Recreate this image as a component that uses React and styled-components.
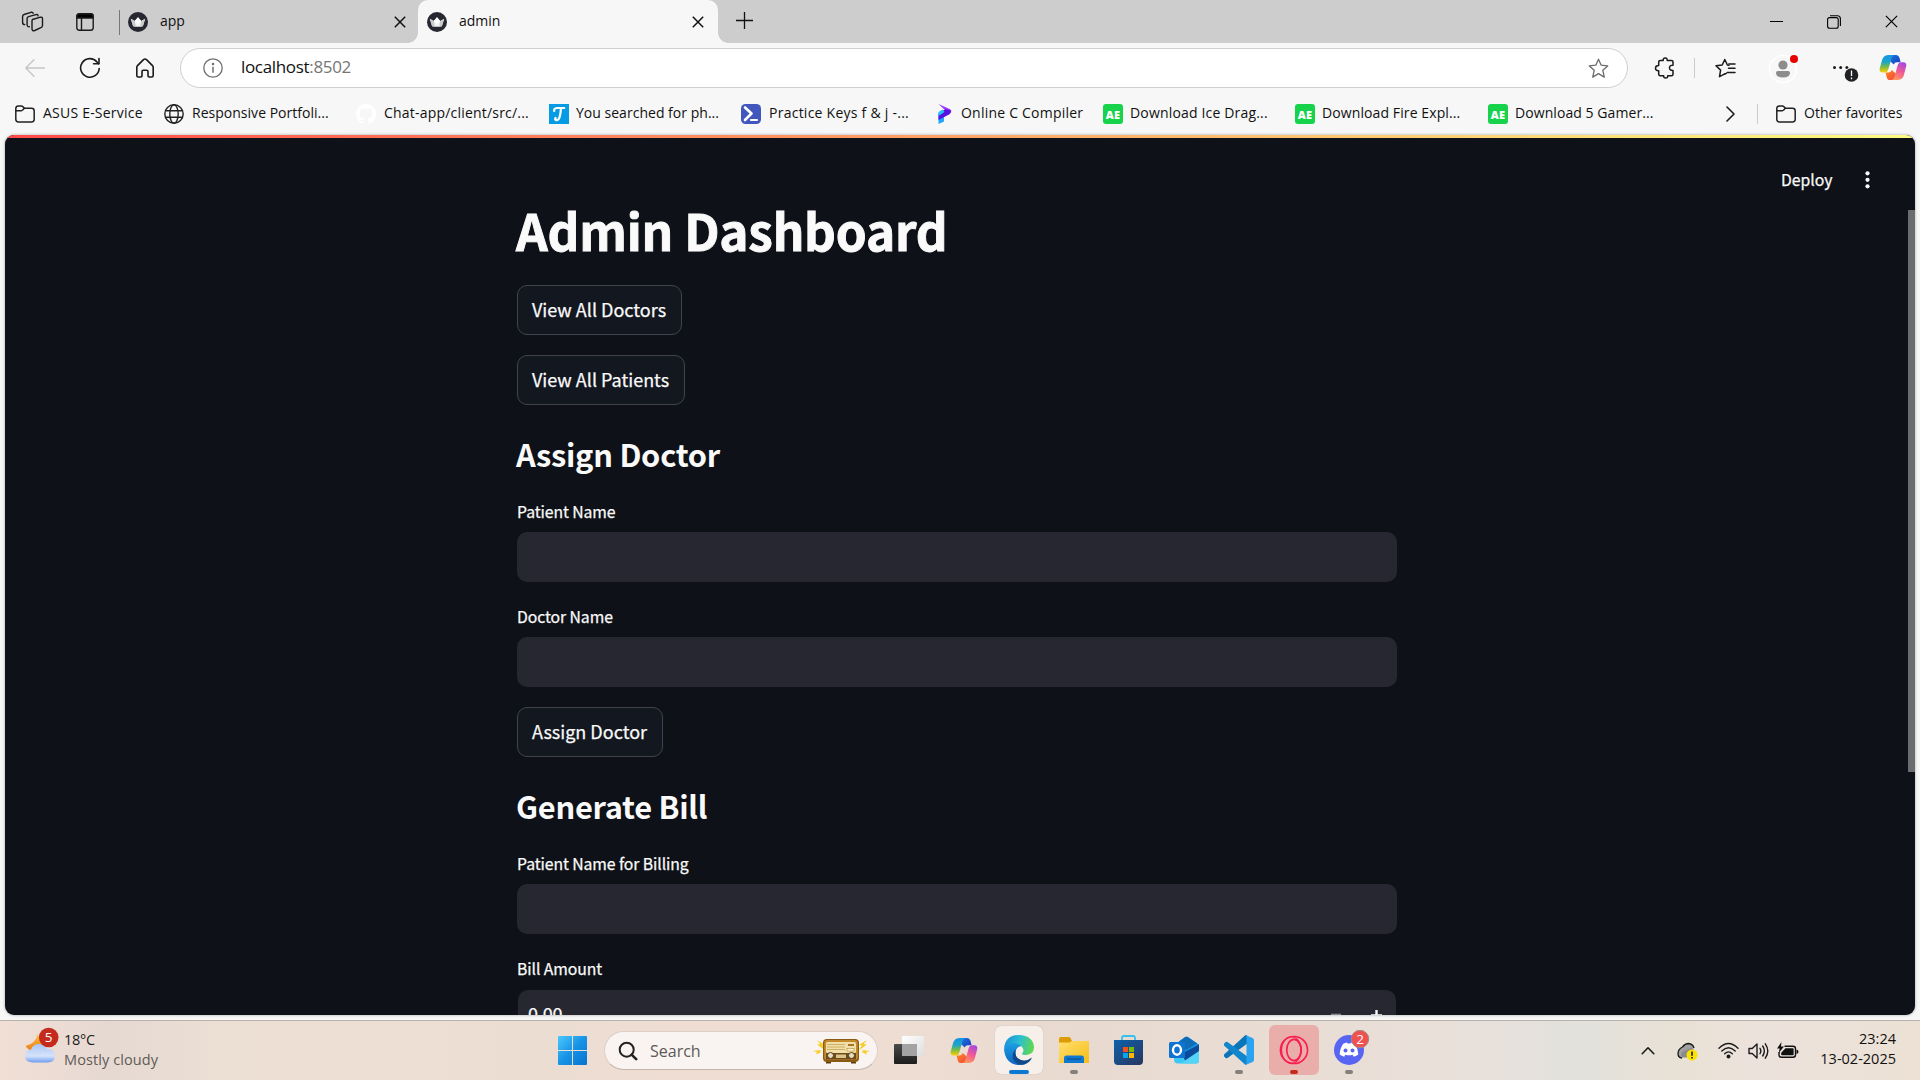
import React from "react";
import styled, { createGlobalStyle } from "styled-components";

const Global = createGlobalStyle`
  * { box-sizing: border-box; }
  html, body { margin: 0; padding: 0; overflow: hidden; }
  body { font-family: "Open Sans", "Noto Sans", sans-serif; }
  svg { display: block; flex: none; }
`;

const Screen = styled.div`
  width: 1920px;
  height: 1080px;
  display: flex;
  flex-direction: column;
  background: #f7f7f7;
  overflow: hidden;
`;

const Text = styled.span`
  display: block;
  flex: none;
  white-space: pre;
  font-size: ${(p) => p.$size || 14}px;
  line-height: ${(p) => p.$lh || 20}px;
  letter-spacing: ${(p) => p.$ls || 0}px;
  color: ${(p) => p.$color || "#111"};
`;

/* ---------- tab strip ---------- */
const TabStrip = styled.div`
  height: 43px;
  background: #cdcdcd;
  display: flex;
  flex: none;
`;
const StripTools = styled.div`
  width: 118px;
  display: flex;
  align-items: center;
  padding-left: 21px;
  gap: 32px;
`;
const StripRule = styled.div`
  width: 1px;
  height: 25px;
  margin: 10px 0 0 1px;
  background: #777;
`;
const Tab = styled.div`
  position: relative;
  width: 300px;
  height: 43px;
  display: flex;
  align-items: center;
  padding: 0 ${(p) => (p.$active ? 14 : 12)}px 0 ${(p) => (p.$active ? 9 : 10)}px;
  margin-left: ${(p) => (p.$active ? 0 : -2)}px;
  background: ${(p) => (p.$active ? "#f7f7f7" : "transparent")};
  border-radius: 10px 10px 0 0;
  ${(p) =>
    p.$active &&
    `&::before, &::after {
      content: "";
      position: absolute;
      bottom: 0;
      width: 10px;
      height: 10px;
    }
    &::before { left: -10px; background: radial-gradient(circle at 0 0, transparent 9.5px, #f7f7f7 10px); }
    &::after { right: -10px; background: radial-gradient(circle at 100% 0, transparent 9.5px, #f7f7f7 10px); }`}
`;
const TabTitle = styled(Text)`
  margin: -1px auto 0 12px;
`;
const NewTab = styled.div`
  padding: 12px 0 0 18px;
`;
const WindowControls = styled.div`
  margin-left: auto;
  display: flex;
  align-items: center;
  gap: 44px;
  padding-right: 22px;
`;

/* ---------- toolbar ---------- */
const Toolbar = styled.div`
  height: 49px;
  flex: none;
  display: flex;
  align-items: center;
  padding-left: 24px;
`;
const NavButtons = styled.div`
  width: 156px;
  display: flex;
  gap: 33px;
`;
const Address = styled.div`
  width: 1448px;
  height: 40px;
  border: 1px solid #cfcfcf;
  border-radius: 20px;
  background: #fff;
  display: flex;
  align-items: center;
  padding: 0 18px 0 22px;
  & > :last-child { margin-left: auto; }
`;
const Url = styled(Text)`
  margin-left: 18px;
  margin-top: -1px;
`;
const Port = styled.span`
  color: #767676;
`;
const ToolbarActions = styled.div`
  flex: 1;
  display: flex;
  align-items: center;
  padding-left: 26px;
`;
const Rule = styled.div`
  width: 1px;
  height: 20px;
  background: #cbcbcb;
  margin: 0 ${(p) => p.$r}px 0 ${(p) => p.$l}px;
  flex: none;
`;
const Avatar = styled.div`
  margin-left: 32px;
`;
const More = styled.div`
  margin-left: 32px;
`;
const CopilotSlot = styled.div`
  margin-left: 19px;
`;

/* ---------- bookmarks ---------- */
const Bookmarks = styled.div`
  height: 43px;
  flex: none;
  display: flex;
  align-items: center;
  padding: 0 0 0 15px;
`;
const Bookmark = styled.div`
  width: ${(p) => p.$w}px;
  flex: none;
  display: flex;
  align-items: center;
  gap: ${(p) => p.$gap || 8}px;
`;
const BookText = styled(Text)`
  margin-top: -1px;
`;
const AeTile = styled.div`
  width: 20px;
  height: 20px;
  border-radius: 3px;
  background: #17d24b;
  color: #fff;
  font: 800 11px/22px "Open Sans", sans-serif;
  text-align: center;
  letter-spacing: 0.2px;
`;

/* ---------- page ---------- */
const PageFrame = styled.div`
  height: 885px;
  flex: none;
  padding: 0 5px 5px;
  background: #f7f7f7;
`;
const Page = styled.main`
  position: relative;
  height: 880px;
  border-radius: 9px;
  background: #0e1117;
  overflow: hidden;
  box-shadow: 0 0 3px rgba(0, 0, 0, 0.35);
  font-family: "Noto Sans CJK SC", sans-serif;
  -webkit-text-stroke: 0.25px currentColor;
`;
const Decoration = styled.div`
  height: 3px;
  background: linear-gradient(90deg, #ff4b4b, #fffd80);
`;
const PageHeader = styled.header`
  height: 61px;
  padding: 23px 0 0 1776px;
  display: flex;
  align-items: center;
`;
const KebabSlot = styled.div`
  margin-left: auto;
  padding-right: 45px;
`;
const Block = styled.section`
  width: 880px;
  margin: 0 0 0 512px;
  display: flex;
  flex-direction: column;
  align-items: flex-start;
`;
const Title = styled.h1`
  margin: 0 0 25px -1px;
  color: #fafafa;
  font-size: 49.5px;
  line-height: 61px;
  font-weight: 700;
  white-space: nowrap;
  letter-spacing: -0.2px;
  -webkit-text-stroke: 0.9px currentColor;
`;
const Heading = styled.h2`
  margin: 28px 0 25px -1px;
  color: #fafafa;
  font-size: 30.8px;
  line-height: 42px;
  font-weight: 600;
  white-space: nowrap;
  letter-spacing: -0.27px;
  -webkit-text-stroke: 0;
`;
const Button = styled.button`
  height: 50px;
  width: ${(p) => p.$w}px;
  padding: 0 0 3px 14px;
  margin: ${(p) => p.$mt || 0}px 0 0;
  text-align: left;
  border: 1px solid #41444c;
  border-radius: 10px;
  background: #131720;
  color: #fafafa;
  font: 400 18px/28px "Noto Sans CJK SC", sans-serif;
  white-space: nowrap;
`;
const FieldLabel = styled.label`
  margin: ${(p) => p.$mt || 0}px 0 8px;
  color: #fafafa;
  font-size: 15.75px;
  line-height: 24px;
  letter-spacing: -0.08px;
  white-space: nowrap;
`;
const Field = styled.div`
  width: 880px;
  height: 50px;
  border-radius: 10px;
  background: #262730;
`;
const NumberField = styled(Field)`
  width: 878px;
  margin: 1px 0 0 1px;
  padding: 0 14px 0 10px;
  display: flex;
  align-items: center;
  color: #fafafa;
`;
const Amount = styled(Text)`
  margin-top: -4px;
`;
const Steppers = styled.div`
  margin-left: auto;
  display: flex;
  align-items: center;
  gap: 30px;
`;
const Scrollbar = styled.div`
  position: absolute;
  right: 0;
  top: 75px;
  width: 7px;
  height: 562px;
  background: #6b6c70;
`;

/* ---------- taskbar ---------- */
const Taskbar = styled.footer`
  height: 60px;
  flex: none;
  display: flex;
  border-top: 1px solid #b9b2ac;
  background: linear-gradient(90deg, #f1dfd6 0, #e6d9d2 110px, #ecdfd4 230px, #eedfd4 380px, #ebddd2 520px, #efddd3 700px, #eeddd3 900px, #e8dad0 1090px, #e9ded5 1330px, #e9e0da 1450px, #e2e1dc 1580px, #e9e1d5 1680px, #ece2dc 1760px, #ece1d4 1920px);
`;
const Weather = styled.div`
  width: 545px;
  display: flex;
  padding: 5px 0 0 23px;
  gap: 4px;
`;
const WeatherText = styled.div`
  padding-top: 4px;
`;
const Slot = styled.div`
  width: 55px;
  height: 59px;
  flex: none;
  display: flex;
  align-items: center;
  justify-content: center;
  padding-left: 1px;
`;
const Tile = styled.div`
  position: relative;
  width: ${(p) => p.$size || 48}px;
  height: ${(p) => p.$size || 48}px;
  margin-top: -1px;
  border-radius: 6px;
  display: flex;
  align-items: center;
  justify-content: center;
  background: ${(p) => p.$bg || "transparent"};
  box-shadow: ${(p) => (p.$edge ? "0 0 1px rgba(0,0,0,.25)" : "none")};
`;
const BadgedIcon = styled.div`
  margin: 0 0 4px 6px;
`;
const Running = styled.div`
  position: absolute;
  left: 50%;
  bottom: ${(p) => p.$b || 0}px;
  width: ${(p) => p.$w || 8}px;
  height: 4px;
  border-radius: 2px;
  transform: translateX(-50%);
  background: ${(p) => p.$color || "#85807c"};
`;
const Search = styled.div`
  width: 274px;
  height: 39px;
  margin: 10px 3px 0 4px;
  border-radius: 20px;
  border: 1px solid #dccfc7;
  border-bottom-color: #c3b5ad;
  background: #f9f4f1;
  display: flex;
  align-items: center;
  padding: 0 6px 0 13px;
  & > :last-child { margin-left: auto; }
`;
const SearchLabel = styled(Text)`
  margin: 1px 0 0 12px;
`;
const Tray = styled.div`
  flex: 1;
  display: flex;
  align-items: center;
  padding-left: 265px;
`;
const TrayItem = styled.div`
  margin-right: ${(p) => p.$r}px;
`;
const Clock = styled.div`
  margin-left: auto;
  padding: 0 24px 3px 0;
  display: flex;
  flex-direction: column;
  align-items: flex-end;
`;

/* ---------- icons ---------- */
const line = { fill: "none", stroke: "#1b1b1b", strokeWidth: 1.4, strokeLinecap: "round", strokeLinejoin: "round" };

const Workspaces = () => (
  <svg width="23" height="22" viewBox="0 0 23 22" {...line}>
    <path d="M11.5 8.5l8-2.3q2-.5 2 1.5v6.8q0 1.600-1.600 2.100l-6.200 2.900q-2.500.9-2.700-1.600V10q0-1 .5-1.500z" />
    <path d="M8.300 15.800q-2 .2-2.200-1.800V7.600q0-1.600 1.400-2l7.500-2q1.800-.4 2.100 1.200" />
    <path d="M3.800 13.600q-2 0-2.200-2V5.500q0-1.600 1.400-2l7-2.200q1.700-.4 2.200 1" />
  </svg>
);
const TabActions = () => (
  <svg width="18" height="18" viewBox="0 0 18 18" {...line}>
    <rect x=".8" y=".8" width="16.400" height="16.400" rx="2.400" />
    <path d="M1 3.200Q1 1 3.200 1h11.600Q17 1 17 3.200V5H1z" fill="#000" />
    <path d="M5.500 5v12" />
  </svg>
);
const Crown = () => (
  <svg width="20" height="20" viewBox="0 0 20 20">
    <circle cx="10" cy="10" r="10" fill="#262730" />
    <path d="M2.800 6.800l4 2.100L10 5.200l3.200 3.700 4-2.100-2.300 7.400q-4.900 1.200-9.800 0z" fill="#f2f2f2" />
    <path d="M6.800 8.900L10 5.200l3.200 3.700-3.200 3z" fill="#fff" />
    <path d="M2.800 6.800l4 2.100 1 5.600-2.700-.3zM17.200 6.800l-4 2.100-1 5.600 2.700-.3z" fill="#c9cacc" />
  </svg>
);
const Cross = ({ s = 12, c = "#111", w = 1.5 }) => (
  <svg width={s} height={s} viewBox="0 0 12 12" stroke={c} strokeWidth={w} fill="none">
    <path d="M.8.8l10.400 10.400M11.200.8L.8 11.200" />
  </svg>
);
const Plus = () => (
  <svg width="17" height="17" viewBox="0 0 17 17" stroke="#111" strokeWidth="1.300"><path d="M8.500 0v17M0 8.500h17" /></svg>
);
const Minimize = () => (
  <svg width="13" height="13" viewBox="0 0 13 13"><path d="M0 6.500h13" stroke="#000" /></svg>
);
const Restore = () => (
  <svg width="14" height="14" viewBox="0 0 14 14" fill="none" stroke="#000" strokeWidth="1.100">
    <rect x=".6" y="2.600" width="10.600" height="10.600" rx="2" />
    <path d="M3 .7h7.400q3 0 3 3V11" />
  </svg>
);
const Back = () => (
  <svg width="22" height="22" viewBox="0 0 22 22" {...line} stroke="#c6c6c6"><path d="M20.500 11H2M10 2.800L1.800 11l8.200 8.200" /></svg>
);
const Reload = () => (
  <svg width="22" height="22" viewBox="0 0 22 22" {...line} strokeWidth="1.600">
    <path d="M20.200 11.500A9.300 9.300 0 1 1 18 4.900l1.600 1.800" /><path d="M20 1.500v5.300h-5.400" />
  </svg>
);
const Home = () => (
  <svg width="22" height="22" viewBox="0 0 22 22" {...line} strokeWidth="1.600">
    <path d="M2.800 10.200q0-1 .7-1.600l6-6q1.500-1.200 3 0l6 6q.7.6.7 1.600v8.400q0 1.400-1.400 1.400h-2.600q-1.200 0-1.200-1.200v-4.200q0-1.300-1.300-1.300h-3.400Q8 13.300 8 14.600v4.200Q8 20 6.800 20H4.200q-1.400 0-1.400-1.400z" />
  </svg>
);
const Info = () => (
  <svg width="20" height="20" viewBox="0 0 20 20" fill="none" stroke="#6f6f6f" strokeWidth="1.300">
    <circle cx="10" cy="10" r="9.200" /><path d="M10 8.800v6" strokeWidth="1.500" /><circle cx="10" cy="6" r=".6" fill="#6f6f6f" />
  </svg>
);
const starPath = "M10.500 1.200l2.700 6 6.500.7-4.900 4.400 1.500 6.800-5.800-3.500-5.800 3.500 1.500-6.800L1.300 7.900l6.500-.7z";
const Star = () => (
  <svg width="21" height="20" viewBox="0 0 21 20" {...line} stroke="#6c6c6c" strokeWidth="1.300"><path d={starPath} /></svg>
);
const Puzzle = () => (
  <svg width="22" height="22" viewBox="0 0 22 22" {...line} strokeWidth="1.500">
    <path d="M6.200 3.500h3q-.3-2.500 2-2.500t2 2.500h4.300q1.500 0 1.500 1.500v3.200q-3.500-.2-3.500 2.600t3.500 2.700v3.800q0 1.500-1.500 1.500h-3.800q.2 2.200-2 2.200t-2-2.200H6.200q-1.500 0-1.500-1.500v-3.600Q1.500 13.900 1.500 11.200T4.700 8.500V5q0-1.500 1.500-1.500z" />
  </svg>
);
const FavList = () => (
  <svg width="21" height="20" viewBox="0 0 21 20" {...line} strokeWidth="1.500">
    <path d="M14 7.200l-1.600-.2-2.600-5.500L7.200 7 1 7.800l4.600 4.300-1.100 6.600 5.300-2.900" />
    <path d="M13.500 10.300H20M12.300 14.600H20M13.800 6H20M9.800 16l1.500-.6" />
  </svg>
);
const AvatarIcon = () => (
  <svg width="30" height="32" viewBox="0 0 30 32">
    <circle cx="15" cy="17" r="13.500" fill="#f7f7f7" stroke="#fff" strokeWidth="1.500" />
    <circle cx="15" cy="13" r="4.600" fill="#8c8c8c" />
    <path d="M8 20.800q0-1.800 1.800-1.800h10.400q1.800 0 1.800 1.800 0 4.700-7 4.700t-7-4.700z" fill="#8c8c8c" />
    <circle cx="26" cy="7" r="4" fill="#e60000" />
  </svg>
);
const MoreIcon = () => (
  <svg width="30" height="28" viewBox="0 0 30 28">
    <g fill="#1b1b1b"><circle cx="4.500" cy="13.500" r="1.500" /><circle cx="10.700" cy="13.500" r="1.500" /><circle cx="16.900" cy="13.500" r="1.500" /></g>
    <circle cx="21.500" cy="21" r="7.500" fill="#f7f7f7" />
    <circle cx="21.500" cy="21" r="6.800" fill="#202124" />
    <path d="M21.500 16.500v5.500M21.500 23.500v1.800" stroke="#fff" strokeWidth="1.300" />
  </svg>
);
const Copilot = ({ id }) => (
  <svg width="28" height="27" viewBox="0 0 29 28">
    <defs>
      <linearGradient id={id + "a"} x1="0" y1="0" x2="0" y2="1">
        <stop offset="0" stopColor="#1592e6" /><stop offset=".4" stopColor="#1ca6c9" /><stop offset=".65" stopColor="#6fb94e" /><stop offset="1" stopColor="#ffd000" />
      </linearGradient>
      <linearGradient id={id + "b"} x1=".7" y1="0" x2=".3" y2="1">
        <stop offset="0" stopColor="#a548e0" /><stop offset=".5" stopColor="#f25a92" /><stop offset="1" stopColor="#ff9a5c" />
      </linearGradient>
      <linearGradient id={id + "c"} x1="0" y1="0" x2="1" y2="1">
        <stop offset="0" stopColor="#1a78dc" /><stop offset="1" stopColor="#1b3bc4" />
      </linearGradient>
      <linearGradient id={id + "d"} x1="0" y1="0" x2="1" y2="1">
        <stop offset="0" stopColor="#ff8a1e" /><stop offset="1" stopColor="#f2413f" />
      </linearGradient>
    </defs>
    <path d="M10 1h7.500q2.800 0 3.700 3l1.200 4.500h-4q-2.400 0-3.100 2.300L11 7z" fill={`url(#${id}c)`} />
    <path d="M19 27h-7.500q-2.800 0-3.500-3l-1.300-4.800H10q2.500 0 3.300-2.500L18 21z" fill={`url(#${id}d)`} />
    <path d="M10.500 1H16q-2 .2-3 3.400l-3.500 12q-.8 2.800-3.300 2.800H3.700Q.3 19 .6 15.500L3.400 5.500Q5 1 10.500 1z" fill={`url(#${id}a)`} />
    <path d="M18.500 27H13q2-.2 3-3.400l3.400-12.200q.8-2.900 3.300-2.900h2.600q3.300.3 3 3.700l-2.700 10.300Q24 27 18.500 27z" fill={`url(#${id}b)`} />
  </svg>
);
const Folder = () => (
  <svg width="20" height="18" viewBox="0 0 20 18" {...line} stroke="#222" strokeWidth="1.500">
    <path d="M.8 3.600Q.8.900 3.500.900h2.800q1 0 1.700.8l1.300 1.500h7.200q2.700 0 2.700 2.700v8.400q0 2.700-2.700 2.700h-13Q.8 17 .8 14.300z" />
    <path d="M1 5.700h5.200q.9 0 1.500-.8l1.600-1.700" />
  </svg>
);
const Globe = () => (
  <svg width="20" height="20" viewBox="0 0 20 20" fill="none" stroke="#222" strokeWidth="1.400">
    <circle cx="10" cy="10" r="9.200" /><ellipse cx="10" cy="10" rx="4.200" ry="9.200" /><path d="M1.800 6.800h16.400M1.800 13.200h16.400" />
  </svg>
);
const GitHub = () => (
  <svg width="20" height="20" viewBox="0 0 16 16" fill="#fff">
    <path d="M8 0C3.580 0 0 3.580 0 8c0 3.540 2.290 6.530 5.470 7.590.4.070.55-.17.55-.38 0-.19-.010-.82-.010-1.490-2.010.37-2.530-.49-2.690-.94-.090-.23-.48-.94-.82-1.130-.28-.15-.68-.52-.010-.53.63-.010 1.080.58 1.230.82.72 1.210 1.870.87 2.330.66.070-.52.28-.87.51-1.070-1.780-.2-3.640-.89-3.640-3.950 0-.87.31-1.590.82-2.150-.080-.2-.36-1.020.080-2.120 0 0 .67-.21 2.200.82.64-.18 1.320-.27 2-.27s1.360.090 2 .27c1.530-1.040 2.200-.82 2.200-.82.44 1.100.16 1.920.080 2.120.51.56.82 1.270.82 2.150 0 3.070-1.870 3.750-3.650 3.950.29.25.54.73.54 1.480 0 1.070-.010 1.930-.010 2.200 0 .21.15.46.55.38A8.010 8.010 0 0 0 16 8c0-4.420-3.580-8-8-8z" />
  </svg>
);
const JLogo = () => (
  <svg width="20" height="20" viewBox="0 0 20 20">
    <rect width="20" height="20" fill="#069be5" />
    <path d="M5.200 7q-.6-2.600 2.800-3h7.200M12 4.200q-.4 5.800-1.500 9.300-1 3-3.400 2.600-1.600-.6-.5-2.300" fill="none" stroke="#fff" strokeWidth="2.200" strokeLinecap="round" />
  </svg>
);
const PsLogo = () => (
  <svg width="20" height="20" viewBox="0 0 20 20">
    <rect width="20" height="20" rx="4.500" fill="#4257bd" />
    <path d="M4 3.500l6.500 6L4 16" fill="none" stroke="#fff" strokeWidth="2.600" strokeLinecap="round" strokeLinejoin="round" />
    <path d="M10 16h6" stroke="#fff" strokeWidth="2.200" strokeLinecap="round" />
  </svg>
);
const Programiz = () => (
  <svg width="20" height="20" viewBox="-5 0 20 20">
    <path d="M.5 10.500L6 8.500v9L.5 20z" fill="#1fa7ff" />
    <path d="M.5 0L12 5.200q2 1.300 0 2.800L8.500 10 4.500 7.500 7 6z" fill="#9c35ff" />
    <path d="M.5 9l7-3.800 5.800 1.400q0 2.700-2.300 4L.5 16z" fill="#5a10e0" />
    <path d="M.5 8l4-2.500 2 2.500L.5 12z" fill="#22c3f7" />
  </svg>
);
const Chevron = () => (
  <svg width="9" height="16" viewBox="0 0 9 16" {...line} strokeWidth="1.600"><path d="M1 1l7 7-7 7" /></svg>
);
const Kebab = () => (
  <svg width="5" height="18" viewBox="0 0 5 18" fill="#fafafa"><circle cx="2.500" cy="2.300" r="2.100" /><circle cx="2.500" cy="8.800" r="2.100" /><circle cx="2.500" cy="15.300" r="2.100" /></svg>
);
const WeatherIcon = () => (
  <svg width="37" height="42" viewBox="0 0 37 42">
    <defs>
      <linearGradient id="cl" x1="0" y1="0" x2="0" y2="1"><stop offset="0" stopColor="#a9c5f5" /><stop offset=".65" stopColor="#d5e3fa" /><stop offset="1" stopColor="#6f9bf0" /></linearGradient>
      <linearGradient id="mo" x1="0" y1="0" x2="0" y2="1"><stop offset="0" stopColor="#f9c23c" /><stop offset="1" stopColor="#ee7a1c" /></linearGradient>
    </defs>
    <path d="M14.500 8q-1 9-12 12 3 5 9 5 8-1 10-9-5-2-7-8z" fill="url(#mo)" />
    <path d="M10 36.500q-8 0-8-6.500 0-6 6-6.500 2-5.500 8-5.500t8 5q8-.5 8 6.800 0 6.700-7.500 6.700z" fill="url(#cl)" />
    <circle cx="25.700" cy="11.500" r="9.800" fill="#c42b1c" />
    <text x="25.700" y="16.300" textAnchor="middle" fontFamily="Open Sans" fontSize="13.500" fill="#fff">5</text>
  </svg>
);
const Windows = () => (
  <svg width="30" height="29" viewBox="0 0 30 29">
    <defs><linearGradient id="wn" x1="0" y1="0" x2="1" y2="1"><stop offset="0" stopColor="#4cc8fb" /><stop offset=".5" stopColor="#1793e6" /><stop offset="1" stopColor="#0672cf" /></linearGradient></defs>
    <path d="M0 1q0-1 1-1h13v14H0zM15 0h13q1 0 1 1v13H15zM0 15h14v14H1q-1 0-1-1zM15 15h14v13q0 1-1 1H15z" fill="url(#wn)" />
  </svg>
);
const SearchIcon = () => (
  <svg width="20" height="20" viewBox="0 0 20 20" fill="none" stroke="#222" strokeWidth="2">
    <circle cx="8.700" cy="8.700" r="7" /><path d="M13.600 13.600l4.600 4.600" strokeWidth="2.600" strokeLinecap="round" />
  </svg>
);
const Radio = () => (
  <svg width="60" height="28" viewBox="0 0 60 28">
    <path d="M6 3l8 5-3 .5 3.500 5-8.500-6 3.500-.3zM2 14l8-1-1.500 2 3-.5-6.500 3 1-2.500zM56 3l-8 5 3 .5-3.500 5 8.500-6-3.500-.3zM59 14l-8-1 1.500 2-3-.5 6.500 3-1-2.500z" fill="#f5cb1d" />
    <rect x="12" y="2" width="36" height="23" rx="4" fill="#8a5a12" />
    <rect x="13.200" y="3" width="33.600" height="20" rx="3" fill="#c48a2c" />
    <rect x="15" y="5" width="30" height="11" rx="1.500" fill="#f0dfa8" />
    <path d="M16 7.500h18M16 10h18M16 12.500h18" stroke="#c9a95c" strokeWidth=".9" />
    <rect x="37" y="7" width="6" height="2" fill="#a57524" /><rect x="36" y="11.500" width="7" height="2.500" fill="#fff6d0" stroke="#a57524" strokeWidth=".5" />
    <rect x="15" y="16" width="30" height="6.500" fill="#6d4a1c" />
    <circle cx="19.500" cy="18.500" r="3" fill="#e8dcc0" stroke="#54370f" /><circle cx="40.500" cy="18.500" r="3" fill="#e8dcc0" stroke="#54370f" />
    <path d="M25 17.500h10v3.500H25z" fill="#d9c48c" /><path d="M15 25h5v1.500h-5zM40 25h5v1.500h-5z" fill="#5d3d10" />
  </svg>
);
const TaskView = () => (
  <svg width="30" height="28" viewBox="0 0 30 28">
    <defs><linearGradient id="tv" x1="0" y1="0" x2="0" y2="1"><stop offset="0" stopColor="#4a4a4a" /><stop offset="1" stopColor="#1c1c1c" /></linearGradient>
    <linearGradient id="tw" x1="0" y1="0" x2="1" y2="1"><stop offset="0" stopColor="#fff" /><stop offset="1" stopColor="#ddd" /></linearGradient></defs>
    <rect x="0" y="8" width="23" height="20" rx="1" fill="url(#tv)" />
    <rect x="8" y="0" width="22" height="20" rx="1" fill="url(#tw)" />
    <path d="M8 8h15v12H8z" fill="#a3a3a3" />
  </svg>
);
const Edge = () => (
  <svg width="30" height="30" viewBox="0 0 30 30">
    <defs>
      <linearGradient id="e1" x1="0" y1=".3" x2="1" y2=".5"><stop offset="0" stopColor="#1b8fdc" /><stop offset=".5" stopColor="#2bbfd0" /><stop offset="1" stopColor="#62d84e" /></linearGradient>
      <linearGradient id="e2" x1="0" y1="0" x2="0" y2="1"><stop offset="0" stopColor="#1b9de2" /><stop offset="1" stopColor="#0f66c4" /></linearGradient>
    </defs>
    <path d="M0 14Q1 0 15 0q13.500.5 15 11.500.3 8-8 8.500-4 0-4-1.500 1.500-1 1.500-3.500-.8-4.500-6-5Q2 9.500 0 14z" fill="url(#e1)" />
    <path d="M0 14Q2.500 8.500 10 8.300q5 .2 7.500 2.700-5 .5-6 6Q11 27 21 28.800q-3 1.400-7 1.200Q1 28.500 0 14z" fill="url(#e2)" />
    <path d="M12 14.500Q9.500 22 17 25q6 1.500 11-2.500-2 5-7.500 6.900-8 1.500-11.500-5.400Q7.500 17.500 12 14.500z" fill="#114a8b" />
  </svg>
);
const Explorer = () => (
  <svg width="30" height="26" viewBox="0 0 30 26">
    <defs><linearGradient id="ex" x1="0" y1="0" x2="1" y2="1"><stop offset="0" stopColor="#ffdf6e" /><stop offset="1" stopColor="#f8bd18" /></linearGradient></defs>
    <path d="M0 2q0-2 2-2h8q1 0 1.500 1L13 4H30v6H0z" fill="#dd9b04" />
    <path d="M0 5.500h10.500L13 4h17v22H0z" fill="url(#ex)" />
    <path d="M5 26v-5q0-2.500 2.500-2.500h15Q25 18.500 25 21v5z" fill="#0f78cf" /><path d="M8 22h14" stroke="#0a4f95" strokeWidth="1.200" />
  </svg>
);
const Store = () => (
  <svg width="30" height="30" viewBox="0 0 30 30">
    <defs><linearGradient id="st" x1="0" y1="0" x2="1" y2="1"><stop offset="0" stopColor="#0c62ab" /><stop offset="1" stopColor="#2a3560" /></linearGradient></defs>
    <path d="M8 6V3q0-2 2-2h9q2 0 2 2v3" fill="none" stroke="#35c0f2" strokeWidth="1.800" />
    <path d="M0 5h29v21q0 4-4 4H4q-4 0-4-4z" fill="url(#st)" />
    <path d="M9 12h5v5H9z" fill="#f25022" /><path d="M15 12h5v5h-5z" fill="#7fba00" /><path d="M9 18h5v5H9z" fill="#00a4ef" /><path d="M15 18h5v5h-5z" fill="#ffb900" />
  </svg>
);
const Outlook = () => (
  <svg width="30" height="28" viewBox="0 0 30 28">
    <path d="M5 9l11-8q1.500-1 3 0l11 7.500V16H5z" fill="#1c93e0" />
    <path d="M9 6.500L16 1.300q1.500-1 3 0L28 7.500 17 14z" fill="#0f6cb8" />
    <path d="M5 17l9 1 16-5v11.500q0 3-3 3H9q-4 0-4-4z" fill="#3bc9f3" />
    <path d="M13 17.500L30 8.500V15l-14 9.500z" fill="#0c4b9b" />
    <path d="M12 27.500L30 15.500v9q0 3-3 3z" fill="#55d4f7" />
    <rect x="0" y="6" width="16" height="16" rx="1.500" fill="#0f73d1" />
    <ellipse cx="8" cy="14" rx="4" ry="4.700" fill="none" stroke="#fff" strokeWidth="2.400" />
  </svg>
);
const VsCode = () => (
  <svg width="30" height="30" viewBox="0 0 30 30">
    <path d="M0 19.500L21.500 0 24 1v7L3.500 23q-1 .7-1.800 0L.2 21.500q-.8-1-.2-2z" fill="#0a75b8" />
    <path d="M0 10.500q-.6-1 .2-2L1.700 7q.8-.7 1.800 0L24 22v6l-2.500 2z" fill="#1286cc" />
    <path d="M21.500 0L28.500 3q1.500.8 1.500 2v20q0 1.300-1.500 2L21.500 30q1-1 1-2.500v-25Q22.500 1 21.500 0z" fill="#2aa4f0" />
  </svg>
);
const Opera = () => (
  <svg width="30" height="30" viewBox="0 0 31 31" fill="none" stroke="#fa1e4e">
    <circle cx="15.500" cy="15.500" r="14" strokeWidth="1.700" /><ellipse cx="12.800" cy="15.500" rx="10.200" ry="13.700" strokeWidth="1.100" /><ellipse cx="15.500" cy="15.500" rx="7.500" ry="11" strokeWidth="1.700" /><path d="M17 4.500q5.500 4 5.500 11t-5.500 11" strokeWidth="1.100" />
  </svg>
);
const Discord = () => (
  <svg width="36" height="36" viewBox="0 0 36 36">
    <circle cx="15" cy="20" r="15" fill="#5865f2" />
    <path d="M9.300 13.700q1.800-.9 3.700-1.200l.5 1h3l.5-1q2 .3 3.800 1.200 3.400 5 3.500 10.800-1.900 1.500-4.500 2.200l-1.200-1.900q-3.600 1-7.200 0L10.200 26.700q-2.600-.7-4.500-2.200.1-6 3.600-10.800z" fill="#fff" />
    <circle cx="11.500" cy="20.500" r="2" fill="#5865f2" /><circle cx="18.500" cy="20.500" r="2" fill="#5865f2" />
    <circle cx="26" cy="9" r="8.700" fill="#f0504f" stroke="#a08a86" strokeWidth="1" />
    <text x="26" y="13.800" textAnchor="middle" fontFamily="Open Sans" fontSize="13.500" fill="#fff">2</text>
  </svg>
);
const Up = () => <svg width="14" height="9" viewBox="0 0 14 9" {...line} strokeWidth="1.600"><path d="M1.200 7.700L7 1.800l5.800 5.900" /></svg>;
const OneDrive = () => (
  <svg width="21" height="20" viewBox="0 0 21 20">
    <path d="M5 17q-4-.3-4-4.500Q1.200 8 5.500 6 8 2.500 11.500 2.500q4.500.5 5.500 4.500" fill="#a0a0a0" stroke="#1c1c1c" strokeWidth="1.300" />
    <path d="M5 16.500q-2.500-4 2-6.500l8-3.500 2 3-4 7z" fill="#8b8b8b" />
    <circle cx="15" cy="14" r="5.500" fill="#fbe200" /><path d="M15 10.500v4.200M15 16v1.500" stroke="#111" strokeWidth="1.500" />
  </svg>
);
const Wifi = () => (
  <svg width="21" height="17" viewBox="0 0 21 17" {...line} strokeWidth="1.400">
    <path d="M1 6.200q9.500-9.500 19 0M3.800 9q6.700-6.700 13.400 0M6.700 11.800q3.800-3.800 7.600 0" /><circle cx="10.500" cy="14.500" r="1.300" fill="#1b1b1b" />
  </svg>
);
const Sound = () => (
  <svg width="21" height="18" viewBox="0 0 21 18" {...line}>
    <path d="M1 6.500h3.200L9 2v14l-4.800-4.500H1zM12 6.300q1.700 2.700 0 5.400M14.700 4q3.300 5 0 10M17.300 1.800q5 7.200 0 14.400" />
  </svg>
);
const Battery = () => (
  <svg width="22" height="18" viewBox="0 0 22 18">
    <path d="M7.500 4.200H16q2.500 0 2.500 2.500v6q0 2.500-2.500 2.500H4.500Q2 15.200 2 12.700V10" fill="none" stroke="#111" strokeWidth="1.400" />
    <path d="M8.500 6.300H16q.6 0 .6.700v5.500q0 .7-.6.700H5q-.8 0-.8-.7V10.800z" fill="#111" /><path d="M19.500 7.500q2 .3 2 2.200t-2 2.200z" fill="#111" />
    <path d="M4.500 0L0 6.500h2.600L1.800 11 7 4.500H4z" fill="#111" />
  </svg>
);
const MinusSign = () => (
  <svg width="10" height="10" viewBox="0 0 10 10"><path d="M0 5h10" stroke="#83858f" strokeWidth="2.600" /></svg>
);
const PlusSign = () => (
  <svg width="11" height="11" viewBox="0 0 11 11"><path d="M0 5.500h11M5.500 0v11" stroke="#fafafa" strokeWidth="2.400" /></svg>
);

const bookmarks = [
  { w: 149, ls: 0.22, icon: <Folder />, text: "ASUS E-Service" },
  { w: 192, ls: 0.02, icon: <Globe />, text: "Responsive Portfoli..." },
  { w: 193, ls: 0.2, icon: <GitHub />, text: "Chat-app/client/src/..." },
  { w: 192, ls: 0.02, gap: 7, icon: <JLogo />, text: "You searched for ph..." },
  { w: 192, ls: 0.25, icon: <PsLogo />, text: "Practice Keys f & j -..." },
  { w: 170, ls: 0.22, icon: <Programiz />, text: "Online C Compiler" },
  { w: 192, ls: 0.17, gap: 7, icon: <AeTile>AE</AeTile>, text: "Download Ice Drag..." },
  { w: 193, ls: 0.1, gap: 7, icon: <AeTile>AE</AeTile>, text: "Download Fire Expl..." },
  { w: 238, ls: 0.07, gap: 7, icon: <AeTile>AE</AeTile>, text: "Download 5 Gamer..." },
];

export default function App() {
  return (
    <Screen>
      <Global />
      <TabStrip>
        <StripTools><Workspaces /><TabActions /></StripTools>
        <StripRule />
        <Tab><Crown /><TabTitle>app</TabTitle><Cross /></Tab>
        <Tab $active><Crown /><TabTitle>admin</TabTitle><Cross /></Tab>
        <NewTab><Plus /></NewTab>
        <WindowControls><Minimize /><Restore /><Cross s={13} w={1.1} c="#000" /></WindowControls>
      </TabStrip>
      <Toolbar>
        <NavButtons><Back /><Reload /><Home /></NavButtons>
        <Address>
          <Info />
          <Url $size={17} $lh={24} $ls={-0.33}>localhost<Port>:8502</Port></Url>
          <Star />
        </Address>
        <ToolbarActions>
          <Puzzle /><Rule $l={18} $r={20} /><FavList />
          <Avatar><AvatarIcon /></Avatar>
          <More><MoreIcon /></More>
          <CopilotSlot><Copilot id="tc" /></CopilotSlot>
        </ToolbarActions>
      </Toolbar>
      <Bookmarks>
        {bookmarks.map((b) => (
          <Bookmark key={b.text} $w={b.w} $gap={b.gap}>{b.icon}<BookText $ls={b.ls}>{b.text}</BookText></Bookmark>
        ))}
        <Chevron /><Rule $l={22} $r={18} />
        <Bookmark $w={130}><Folder /><BookText>Other favorites</BookText></Bookmark>
      </Bookmarks>
      <PageFrame>
        <Page>
          <Decoration />
          <PageHeader>
            <Text $size={15.75} $lh={24} $color="#fafafa">Deploy</Text>
            <KebabSlot><Kebab /></KebabSlot>
          </PageHeader>
          <Block>
            <Title>Admin Dashboard</Title>
            <Button $w={165}>View All Doctors</Button>
            <Button $w={168} $mt={20}>View All Patients</Button>
            <Heading>Assign Doctor</Heading>
            <FieldLabel>Patient Name</FieldLabel>
            <Field />
            <FieldLabel $mt={23}>Doctor Name</FieldLabel>
            <Field />
            <Button $w={146} $mt={20}>Assign Doctor</Button>
            <Heading>Generate Bill</Heading>
            <FieldLabel>Patient Name for Billing</FieldLabel>
            <Field />
            <FieldLabel $mt={23}>Bill Amount</FieldLabel>
            <NumberField>
              <Amount $size={18} $lh={28} $ls={-0.15} $color="#fafafa">0.00</Amount>
              <Steppers><MinusSign /><PlusSign /></Steppers>
            </NumberField>
          </Block>
          <Scrollbar />
        </Page>
      </PageFrame>
      <Taskbar>
        <Weather>
          <WeatherIcon />
          <WeatherText>
            <Text $size={14.5} $ls={-0.3} $color="#1c1b1a">18°C</Text>
            <Text $size={14.5} $ls={0.1} $color="#5f5a57">Mostly cloudy</Text>
          </WeatherText>
        </Weather>
        <Slot><Windows /></Slot>
        <Search><SearchIcon /><SearchLabel $size={16} $lh={24} $color="#5d5a58">Search</SearchLabel><Radio /></Search>
        <Slot><Tile><TaskView /></Tile></Slot>
        <Slot><Tile><Copilot id="bc" /></Tile></Slot>
        <Slot><Tile $bg="#f6efea" $edge><Edge /><Running $w={20} $color="#0b78d4" /></Tile></Slot>
        <Slot><Tile><Explorer /><Running /></Tile></Slot>
        <Slot><Tile><Store /></Tile></Slot>
        <Slot><Tile><Outlook /></Tile></Slot>
        <Slot><Tile><VsCode /><Running /></Tile></Slot>
        <Slot><Tile $size={50} $bg="#e9aeaa"><Opera /><Running $b={1} $color="#c42b1c" /></Tile></Slot>
        <Slot><Tile><BadgedIcon><Discord /></BadgedIcon><Running /></Tile></Slot>
        <Tray>
          <TrayItem $r={22}><Up /></TrayItem>
          <TrayItem $r={20}><OneDrive /></TrayItem>
          <TrayItem $r={9}><Wifi /></TrayItem>
          <TrayItem $r={8}><Sound /></TrayItem>
          <Battery />
          <Clock><Text $size={14.5}>23:24</Text><Text $size={14.5}>13-02-2025</Text></Clock>
        </Tray>
      </Taskbar>
    </Screen>
  );
}
